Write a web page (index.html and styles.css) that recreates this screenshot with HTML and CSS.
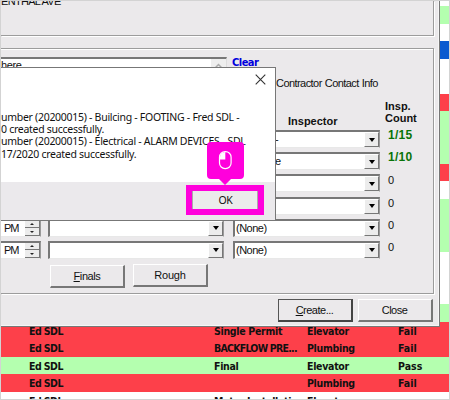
FILE: index.html
```
<!DOCTYPE html>
<html lang="en">
<head>
<meta charset="utf-8">
<title>Create inspections</title>
<link rel="stylesheet" href="styles.css">
</head>
<body>
<div class="screen">
  <div class="list">
    <div class="row"></div><div class="row green"></div><div class="row"></div><div class="row blue"></div>
    <div class="row"></div><div class="row"></div><div class="row red"></div><div class="row green"></div>
    <div class="row green"></div><div class="row green"></div><div class="row red"></div><div class="row"></div>
    <div class="row green"></div><div class="row green"></div><div class="row green"></div><div class="row"></div>
    <div class="row"></div><div class="row"></div><div class="row green"></div>
    <div class="row red"><span>Ed SDL</span><span>Single Permit</span><span>Elevator</span><span>Fail</span></div>
    <div class="row red"><span>Ed SDL</span><span class="tight">BACKFLOW PRE...</span><span>Plumbing</span><span>Fail</span></div>
    <div class="row green"><span>Ed SDL</span><span>Final</span><span>Elevator</span><span>Pass</span></div>
    <div class="row red"><span>Ed SDL</span><span></span><span>Plumbing</span><span>Fail</span></div>
    <div class="row"><span>Ed SDL</span><span>Meter Installati</span><span>Elevator</span><span></span></div>
  </div>

  <div class="window">
    <div class="group address"><span>ENTHAL AVE</span></div>
    <div class="group form">
      <div class="memo-row">
        <div class="memo"><span>here.</span><i class="scroll"><svg width="7" height="5" viewBox="0 0 7 5"><path d="M.5 4.5l3-3 3 3" fill="none" stroke="#aaa" stroke-width="1.5"/></svg></i></div>
        <a class="clear">Clear</a>
      </div>
      <div class="contact">Contractor Contact Info</div>
      <div class="heads"><b>Inspector</b><b class="count-head">Insp.<br>Count</b></div>
      <div class="fields">
        <div class="time"></div><div class="combo"></div><div class="combo"><span class="dash">-</span><i class="arrow"></i></div><b class="num">1/15</b>
        <div class="time"></div><div class="combo"></div><div class="combo"><span class="dash">e</span><i class="arrow"></i></div><b class="num">1/10</b>
        <div class="time"></div><div class="combo"></div><div class="combo"><i class="arrow"></i></div><span class="num">0</span>
        <div class="time"></div><div class="combo"></div><div class="combo"><i class="arrow"></i></div><span class="num">0</span>
        <div class="time"><span>PM</span><i class="spin"><u></u><u class="down"></u></i></div><div class="combo"><i class="arrow"></i></div><div class="combo"><span>(None)</span><i class="arrow"></i></div><span class="num">0</span>
        <div class="time"><span>PM</span><i class="spin"><u></u><u class="down"></u></i></div><div class="combo"><i class="arrow"></i></div><div class="combo"><span>(None)</span><i class="arrow"></i></div><span class="num">0</span>
      </div>
      <div class="presets"><div class="btn"><span><u>F</u>inals</span></div><div class="btn"><span>Rough</span></div></div>
    </div>
    <div class="actions"><div class="btn default"><span><u>C</u>reate...</span></div><div class="btn"><span>Close</span></div></div>
  </div>

  <div class="message">
    <div class="title"><svg width="11" height="11" viewBox="0 0 11 11"><path d="M.7.7l9.6 9.6M10.3.7L.7 10.3" stroke="#333" stroke-width="1.1"/></svg></div>
    <div class="body">
      <p>umber (20200015) - Builcing - FOOTING - Fred SDL -</p>
      <p>0 created successfully.</p>
      <p>umber (20200015) - Electrical - ALARM DEVICES - SDL</p>
      <p>17/2020 created successfully.</p>
    </div>
    <div class="footer"><div class="ok">OK</div></div>
  </div>

  <div class="callout">
    <svg width="38" height="44" viewBox="0 0 38 44">
      <path d="M4 0h29q4 0 4 4v29q0 4-4 4h-9l-6 6-6-6H4q-4 0-4-4V4q0-4 4-4z" fill="#ff00dc"/>
      <rect x="12.5" y="9.6" width="11.6" height="17" rx="5.6" fill="none" stroke="#fff" stroke-width="1.2"/>
      <path d="M13 17.5v-2.300q0-5 5.300-5.200v7.500z" fill="#fff"/>
    </svg>
  </div>
  <div class="highlight"></div>
</div>
</body>
</html>
```
FILE: styles.css
```
* { box-sizing: border-box; }
body { margin: 0; }
.screen {
  position: relative; width: 450px; height: 400px; overflow: hidden;
  background: #fff; color: #111; font: 11px/13px "Liberation Sans", Arial, sans-serif;
}
.screen::after { content: ""; position: absolute; inset: 0; border: 1px solid #d3d3d3; }
i, u { font-style: normal; }
p { margin: 0; }

/* inspection list behind the dialog */
.list { margin-top: -11.55px; display: grid; grid-auto-rows: 17.55px; }
.row {
  display: grid; grid-template-columns: 185px 93px 91px 1fr; padding-left: 29px; letter-spacing: -.3px;
  font: bold 10.5px/18px "DejaVu Sans Condensed", "DejaVu Sans", sans-serif; white-space: nowrap;
}
.row span:first-child { letter-spacing: -.55px; }
.row .tight { letter-spacing: -.75px; }
.row span:last-child { letter-spacing: 0; }
.green { background: #b4ffaf; }
.red { background: #fd404a; }
.blue { background: #0b5bd0; }

/* dialog window */
.window {
  position: absolute; left: 1px; top: 1px; width: 438.5px; height: 326px;
  padding-right: 5px; background: #ebe9eb; border-right: 1px solid #777; border-bottom: 1px solid #777;
  box-shadow: inset -1px -1px #f6f6f6; display: flex; flex-direction: column;
}
.group { border: 1px solid #9c9c9c; border-left: 0; box-shadow: 1px 1px #fff, inset 0 1px #fff; }
.address { height: 35px; margin-bottom: 12px; border-top: 0; box-shadow: 1px 1px #fff; overflow: hidden; }
.address span { display: block; margin-top: -6px; letter-spacing: -.7px; }
.form { height: 246px; display: flex; flex-direction: column; }
.memo-row { display: flex; margin-top: 8px; height: 20px; }
.memo { display: flex; justify-content: space-between; width: 226px; background: #fff; border-top: 2px solid #777; border-right: 1px solid #ddd; letter-spacing: -.4px; }
.scroll { width: 15px; padding: 4px 0 0 4px; background: #eee; line-height: 0; }
.clear { margin: -1px 0 0 5px; color: #00d; text-decoration: underline; font: bold 11px/13px "DejaVu Sans Condensed", sans-serif; letter-spacing: -.5px; }
.contact { margin: -1px 0 0 275px; height: 26px; padding-top: 1px; white-space: nowrap; letter-spacing: -.56px; word-spacing: .5px; }
.heads { display: flex; align-items: flex-end; margin-top: -2px; padding-left: 287px; height: 24px; line-height: 12px; }
.heads b:first-child { width: 97px; margin-bottom: -3px; }
.fields { margin-top: 6px; display: grid; grid-template-columns: 40px 176px 147px 40px; grid-auto-rows: 22.2px; }
.fields > :nth-child(4n+2) { margin-left: 7px; margin-right: -7px; }
.fields > :nth-child(4n+3) { margin-left: 16px; margin-right: -16px; }
.fields > :nth-child(4n) { margin-left: 24px; line-height: 13px; }
.time, .combo {
  display: flex; justify-content: space-between; height: 18px; background: #fff;
  border: 2px solid #777; border-right: 1px solid #999; border-bottom: 1px solid #e8e8e8; line-height: 15px;
}
.time { border-left: 0; }
.time span { padding-left: 3px; letter-spacing: -1px; }
.combo span { padding-left: 1px; letter-spacing: -.5px; }
.combo .dash { padding-left: 40px; }
.arrow { margin-left: auto; width: 15px; background: #ececec; border: 1px solid #fff; border-right-color: #777; border-bottom-color: #777; display: flex; align-items: center; justify-content: center; }
.arrow::before { content: ""; border: 3.5px solid transparent; border-top: 4px solid #000; border-bottom: 0; }
.spin { width: 15px; display: grid; }
.spin u { background: #ececec; border-bottom: 1px solid #777; border-right: 1px solid #777; display: flex; align-items: center; justify-content: center; }
.spin u::before { content: ""; border: 2px solid transparent; border-bottom: 2px solid #222; border-top: 0; }
.spin .down::before { transform: rotate(180deg); }
.num { white-space: nowrap; }
b.num { color: #087408; font-size: 12px; letter-spacing: .25px; margin-top: -1px; }
.presets { display: flex; gap: 8px; padding: 2px 0 0 49px; }
.presets .btn + .btn { margin-top: -1px; letter-spacing: -.2px; }
.btn {
  display: flex; align-items: center; justify-content: center; width: 75px; height: 23px;
  background: #ebe9eb; border: 1px solid #fff; border-right: 2px solid #777; border-bottom: 2px solid #777;
  letter-spacing: -.5px;
}
.presets .btn:first-child { letter-spacing: -.4px; }
.actions { display: flex; justify-content: flex-end; gap: 5px; padding: 5px 1px 0 0; }
.default { border-left-color: #555; border-top-color: #555; border-right-color: #444; border-bottom-color: #444; }

/* confirmation message */
.message {
  position: absolute; left: 1px; top: 67px; width: 274.5px; height: 154px; background: #fff;
  border: 1px solid #777; border-left: 0; border-right-width: 1.5px; display: flex; flex-direction: column;
}
.title { height: 43px; display: flex; justify-content: flex-end; padding: 6px 9px 0 0; }
.body { height: 71px; font: 10.5px/12.2px "Noto Sans", "Open Sans", sans-serif; letter-spacing: -.28px; white-space: nowrap; }
.footer { flex: 1; background: #ebe9ec; padding: 8px 0 0 191px; }
.ok { width: 66px; height: 20px; padding-left: 1px; border: 1px solid #aaa; background: #ebebeb; text-align: center; font: 10.5px/18px "Noto Sans", sans-serif; letter-spacing: -.3px; }

/* click marker */
.callout { position: absolute; left: 207px; top: 142px; line-height: 0; }
.highlight { position: absolute; left: 186px; top: 185px; width: 78px; height: 30px; border: 6px solid #ff00dc; }
```
